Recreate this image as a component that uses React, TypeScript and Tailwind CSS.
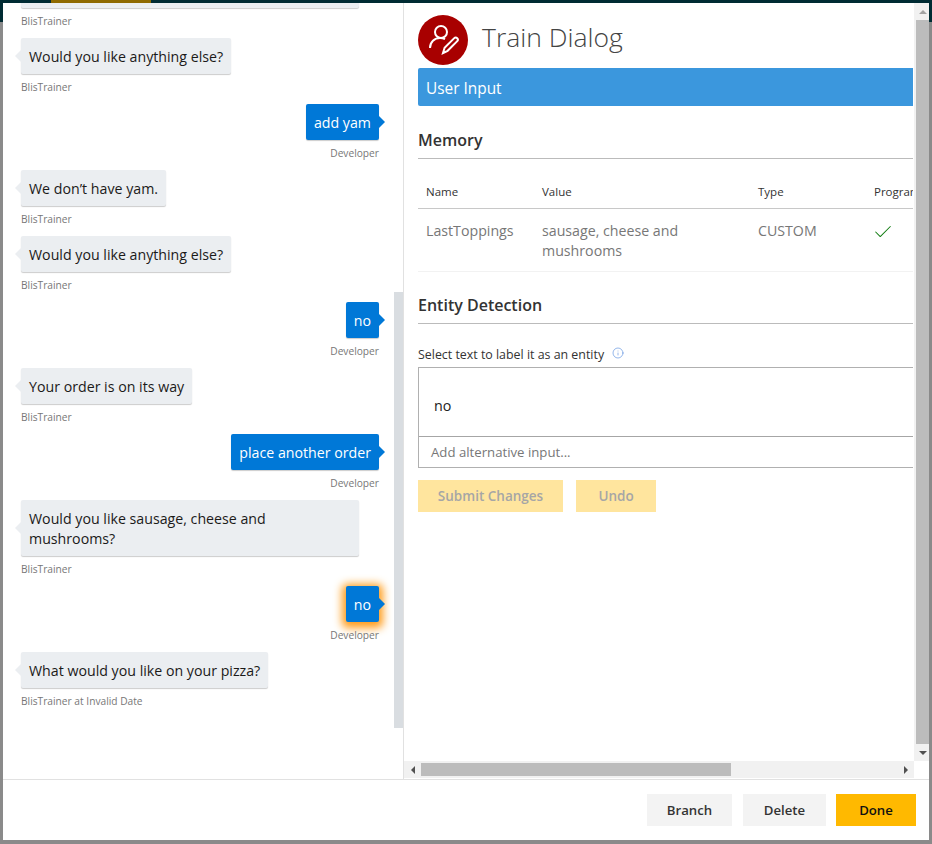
import { Check, Info } from "lucide-react";

const font = "font-['Open_Sans',sans-serif]";

function Bot({ text, who = "BlisTrainer", wide = false }: { text: string; who?: string; wide?: boolean }) {
  return (
    <div className="flex flex-col items-start">
      <div className={`relative bg-[#ebeef1] rounded-[2px] shadow-[0_1px_1px_rgba(0,0,0,0.2)] px-2 pt-[9px] pb-[7px] text-[14.2px] leading-[20px] text-[#1b1a19] ${wide ? "w-[338px]" : ""}`}>
        <span className="absolute left-[-6px] top-1/2 -mt-[6px] border-y-[6px] border-r-[6px] border-y-transparent border-r-[#ebeef1]" />
        {text}
      </div>
      <div className="mt-[6px] h-[15px] text-[10.2px] leading-[15px] text-[#777]">{who}</div>
    </div>
  );
}

function Dev({ text, focus = false }: { text: string; focus?: boolean }) {
  return (
    <div className="flex flex-col items-end">
      <div className={`relative bg-[#0078d7] rounded-[2px] px-2 pt-[9px] pb-[7px] text-[14.2px] leading-[20px] text-white ${focus ? "shadow-[0_2px_8px_4px_#ff9c1a]" : "shadow-[0_1px_1px_rgba(0,0,0,0.2)]"}`}>
        <span className="absolute right-[-6px] top-1/2 -mt-[6px] border-y-[6px] border-l-[6px] border-y-transparent border-l-[#0078d7]" />
        {text}
      </div>
      <div className="relative mt-[6px] h-[15px] text-[10.2px] leading-[15px] text-[#777]">Developer</div>
    </div>
  );
}

export default function App() {
  return (
    <div className={`w-[932px] h-[844px] overflow-hidden bg-[linear-gradient(#002b33_22px,#8a8a8a_22px)] ${font}`}>
      <div className="h-[3px] bg-[#002b33]">
        <div className="ml-[51px] w-[100px] h-full bg-[#8f6a00]" />
      </div>
      <div className="ml-[3px] mr-[3px] h-[837px] bg-white flex flex-col">
        <div className="flex-1 flex min-h-0">
          <div className="w-[401px] border-r border-[#e1e1e1] relative overflow-hidden flex">
            <div className="w-[358px] ml-[18px] -mt-[51px] flex flex-col gap-[9px]">
              <div className="flex flex-col items-start">
                <div className="w-[338px] h-[56px] bg-[#ebeef1] rounded-[2px] shadow-[0_1px_1px_rgba(0,0,0,0.2)]" />
                <div className="mt-[6px] h-[15px] text-[10.2px] leading-[15px] text-[#777]">BlisTrainer</div>
              </div>
              <Bot text="Would you like anything else?" />
              <Dev text="add yam" />
              <Bot text="We don’t have yam." />
              <Bot text="Would you like anything else?" />
              <Dev text="no" />
              <Bot text="Your order is on its way" />
              <Dev text="place another order" />
              <Bot text="Would you like sausage, cheese and mushrooms?" wide />
              <Dev text="no" focus />
              <Bot text="What would you like on your pizza?" who="BlisTrainer at Invalid Date" />
            </div>
            <div className="absolute right-0 top-[289px] w-[9px] h-[436px] bg-[#d9dde1]" />
          </div>
          <div className="flex-1 min-w-0 flex flex-col">
            <div className="flex-1 flex min-h-0">
              <div className="flex-1 min-w-0 ml-[14px] mr-[1px] overflow-hidden">
                <div className="flex items-center h-[51px] mt-[11px] gap-[14px]">
                  <div className="w-[50px] h-[50px] rounded-full bg-[#a80000] flex items-center justify-center">
                    <svg width="34" height="34" viewBox="0 0 34 34" fill="none" stroke="white" strokeWidth="2">
                      <circle cx="15" cy="9" r="6" />
                      <path d="M4 25c0-6 4.500-10 10-10 1.800 0 3.500.4 5 1.200" />
                      <path d="M17 30l1.600-5.200 9.400-9.400c1-1 2.400-1 3.200-.2.800.8.800 2.200-.2 3.200l-9.400 9.400z" />
                    </svg>
                  </div>
                  <div className="pb-[6px] text-[26.5px] font-light leading-[36px] text-[#444]">Train Dialog</div>
                </div>
                <div className="mt-[3px] h-[38px] bg-[#3b97dd] rounded-l-[2px] px-2 pt-[3px] flex items-center text-[15.4px] text-white">User Input</div>
                <div className="mt-[24px] h-[29px] border-b border-[#bbb] text-[16px] font-semibold leading-[20px] text-[#333]">Memory</div>
                <div className="w-[600px]">
                  <div className="mt-[18px] h-[32px] flex text-[11.5px] leading-[30px] text-[#333] border-b border-[#c8c8c8]">
                    <div className="w-[116px] pl-2">Name</div>
                    <div className="w-[216px] pl-2">Value</div>
                    <div className="w-[116px] pl-2">Type</div>
                    <div className="pl-2">Programmatic</div>
                  </div>
                  <div className="h-[63px] flex text-[14.2px] leading-[20px] text-[#777] border-b border-[#f2f2f2] pt-[12px]">
                    <div className="w-[116px] pl-2">LastToppings</div>
                    <div className="w-[216px] pl-2 pr-[40px]">sausage, cheese and mushrooms</div>
                    <div className="w-[116px] pl-2">CUSTOM</div>
                    <div className="pl-[6px]"><Check size={22} strokeWidth={1.1} className="text-[#107c10]" /></div>
                  </div>
                </div>
                <div className="mt-[23px] h-[29px] border-b border-[#bbb] text-[16px] font-semibold leading-[20px] text-[#333]">Entity Detection</div>
                <div className="mt-[22px] h-[21px] flex items-start gap-2 text-[12.400px] leading-[18px] text-[#333]">
                  Select text to label it as an entity
                  <Info size={12} strokeWidth={1} className="text-[#2b6fd4] mt-[1px]" />
                </div>
                <div className="border border-r-0 border-[#b0b0b0]">
                  <div className="h-[69px] pl-[15px] pt-[8px] flex items-center text-[14.3px] text-[#222] border-b border-[#a6a6a6]">no</div>
                  <div className="h-[30px] pl-[12px] pt-[1px] flex items-center text-[13.2px] text-[#777]">Add alternative input...</div>
                </div>
                <div className="mt-[12px] flex gap-[13px]">
                  <div className="w-[145px] h-[32px] bg-[#ffe59e] flex items-center justify-center text-[13.5px] font-semibold text-[#a6a6a6]">Submit Changes</div>
                  <div className="w-[80px] h-[32px] bg-[#ffe59e] flex items-center justify-center text-[13.5px] font-semibold text-[#a6a6a6]">Undo</div>
                </div>
              </div>
              <div className="w-[15px] bg-[#f1f1f1] flex flex-col items-end">
                <div className="h-[17px] w-[13px] flex items-center justify-center"><span className="border-x-[4px] border-b-[4px] border-x-transparent border-b-[#a3a3a3]" /></div>
                <div className="flex-1 w-[13px] bg-[#bcbcbc]" />
                <div className="h-[17px] w-[13px] flex items-center justify-center"><span className="border-x-[4px] border-t-[4px] border-x-transparent border-t-[#505050]" /></div>
              </div>
            </div>
            <div className="h-[17px] mr-[15px] mb-[1px] bg-[#f1f1f1] flex items-center">
              <div className="w-[17px] flex justify-center"><span className="border-y-[4px] border-r-[4px] border-y-transparent border-r-[#505050]" /></div>
              <div className="w-[310px] h-[13px] bg-[#bcbcbc]" />
              <div className="flex-1" />
              <div className="w-[17px] flex justify-center"><span className="border-y-[4px] border-l-[4px] border-y-transparent border-l-[#505050]" /></div>
            </div>
          </div>
        </div>
        <div className="h-[61px] border-t border-[#e1e1e1] flex justify-end items-start pt-[14px] pr-[13px] text-[13.2px] font-semibold text-[#333]">
          <div className="w-[85px] h-[32px] pt-[1px] bg-[#f3f3f3] flex items-center justify-center">Branch</div>
          <div className="w-[83px] h-[32px] pt-[1px] ml-[11px] bg-[#f3f3f3] flex items-center justify-center">Delete</div>
          <div className="w-[80px] h-[32px] pt-[1px] ml-[10px] bg-[#ffb900] flex items-center justify-center text-[#111]">Done</div>
        </div>
      </div>
    </div>
  );
}
